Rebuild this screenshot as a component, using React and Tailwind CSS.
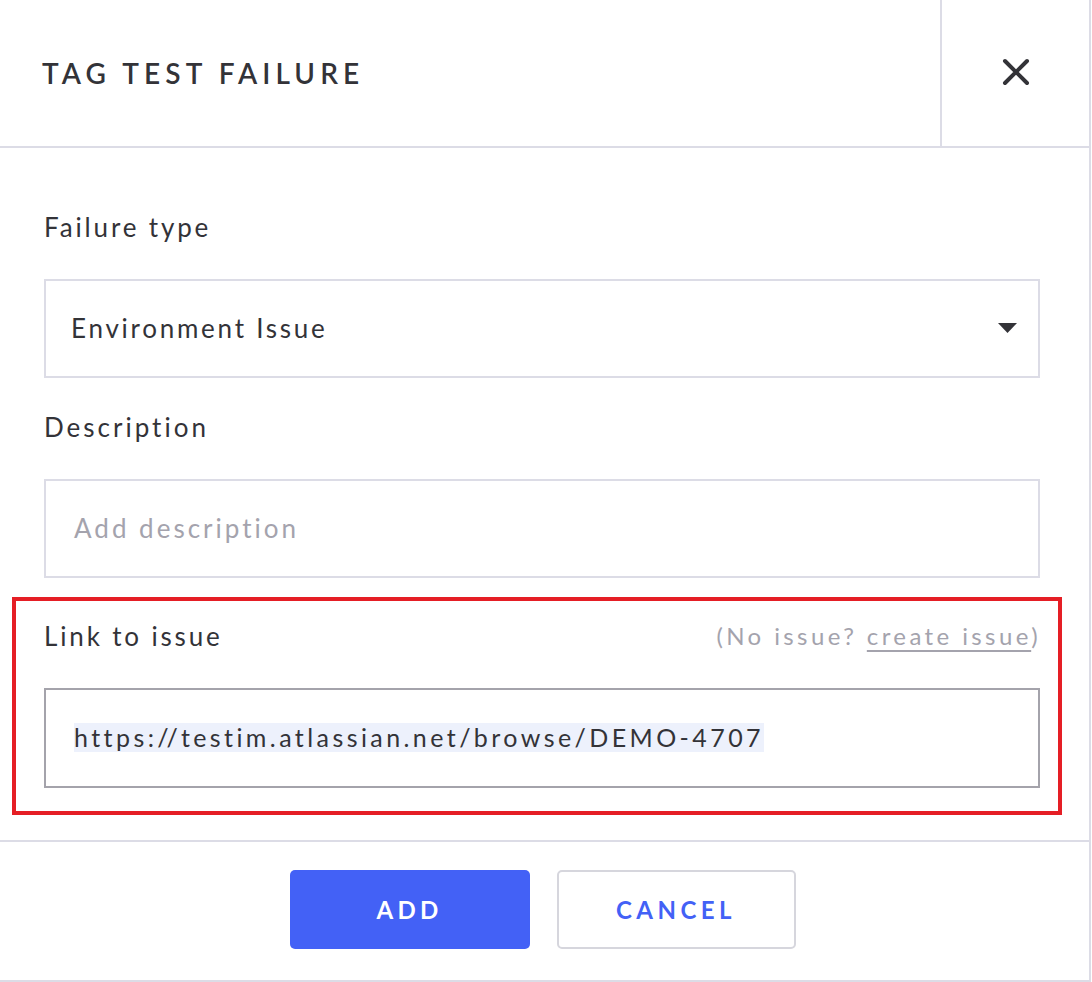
import React from "react";

export default function App() {
  return (
    <div
      className="w-[1092px] h-[982px] bg-white text-[#333338]"
      style={{ fontFamily: "Lato, 'Open Sans', sans-serif" }}
    >
      <div className="w-[1091px] h-[982px] border-r-2 border-b-2 border-[#dcdce6] flex flex-col">
        {/* Header */}
        <div className="h-[148px] border-b-2 border-[#dcdce6] flex">
          <div className="flex-1 flex items-center pl-[42px]">
            <h1 className="text-[28px] font-semibold tracking-[5.1px] leading-[30px] text-[#333338]">
              TAG TEST FAILURE
            </h1>
          </div>
          <div className="w-[149px] border-l-2 border-[#dcdce6] flex items-center justify-center">
            <svg width="28" height="28" viewBox="0 0 28 28" className="-mt-[2px]">
              <path
                d="M3 3 L25 25 M25 3 L3 25"
                stroke="#333338"
                strokeWidth="4"
                strokeLinecap="round"
                fill="none"
              />
            </svg>
          </div>
        </div>

        {/* Body */}
        <div className="flex-1 pt-[64px] pl-[44px] pr-[49px] flex flex-col">
          <div className="h-[30px] leading-[30px] text-[26px] tracking-[2.85px]">Failure type</div>
          <div className="mt-[37px] h-[99px] border-2 border-[#dcdce6] flex items-center justify-between pl-[25px] pr-[21px]">
            <span className="text-[26px] tracking-[2.75px] leading-[30px] -mt-[2px]">Environment Issue</span>
            <svg width="19" height="10" viewBox="0 0 19 10" className="-mt-[2px]">
              <path d="M0 0 L19 0 L9.5 10 Z" fill="#333338" />
            </svg>
          </div>

          <div className="mt-[34px] h-[30px] leading-[30px] text-[26px] tracking-[3px]">Description</div>
          <div className="mt-[37px] h-[99px] border-2 border-[#dcdce6] flex items-center pl-[28px]">
            <span className="text-[26px] tracking-[3px] leading-[30px] text-[#a4a3ad] -mt-[2px]">
              Add description
            </span>
          </div>

          <div className="-ml-[32px] -mr-[22px] mt-[19px] border-4 border-[#e51e25] pt-[20px] pl-[28px] pr-[18px] pb-[23px]">
            <div className="h-[30px] flex items-center justify-between">
              <span className="text-[26px] tracking-[2.85px] leading-[30px]">Link to issue</span>
              <span className="text-[24px] tracking-[3.4px] leading-[30px] text-[#a4a3ad] -mr-[1px]">
                (No issue? <span className="underline underline-offset-[5px]">create issue</span>)
              </span>
            </div>
            <div className="mt-[37px] h-[100px] border-2 border-[#a4a3ab] flex items-center pl-[28px]">
              <span className="bg-[#edf1fc] text-[25px] tracking-[3.42px] leading-[29px] -mt-[2px]">
                https://testim.atlassian.net/browse/DEMO-4707
              </span>
            </div>
          </div>
        </div>

        {/* Footer */}
        <div className="h-[140px] border-t-2 border-[#dcdce6] flex items-start justify-center gap-[27px] pt-[28px] pr-[4px]">
          <button className="w-[240px] h-[79px] rounded-[5px] bg-[#4361f6] text-white text-[24px] font-bold tracking-[4.3px] flex items-center justify-center">
            ADD
          </button>
          <button className="w-[239px] h-[79px] rounded-[5px] border-2 border-[#d6d6dd] bg-white text-[#4361f6] text-[24px] font-bold tracking-[4.5px] flex items-center justify-center">
            CANCEL
          </button>
        </div>
      </div>
    </div>
  );
}
